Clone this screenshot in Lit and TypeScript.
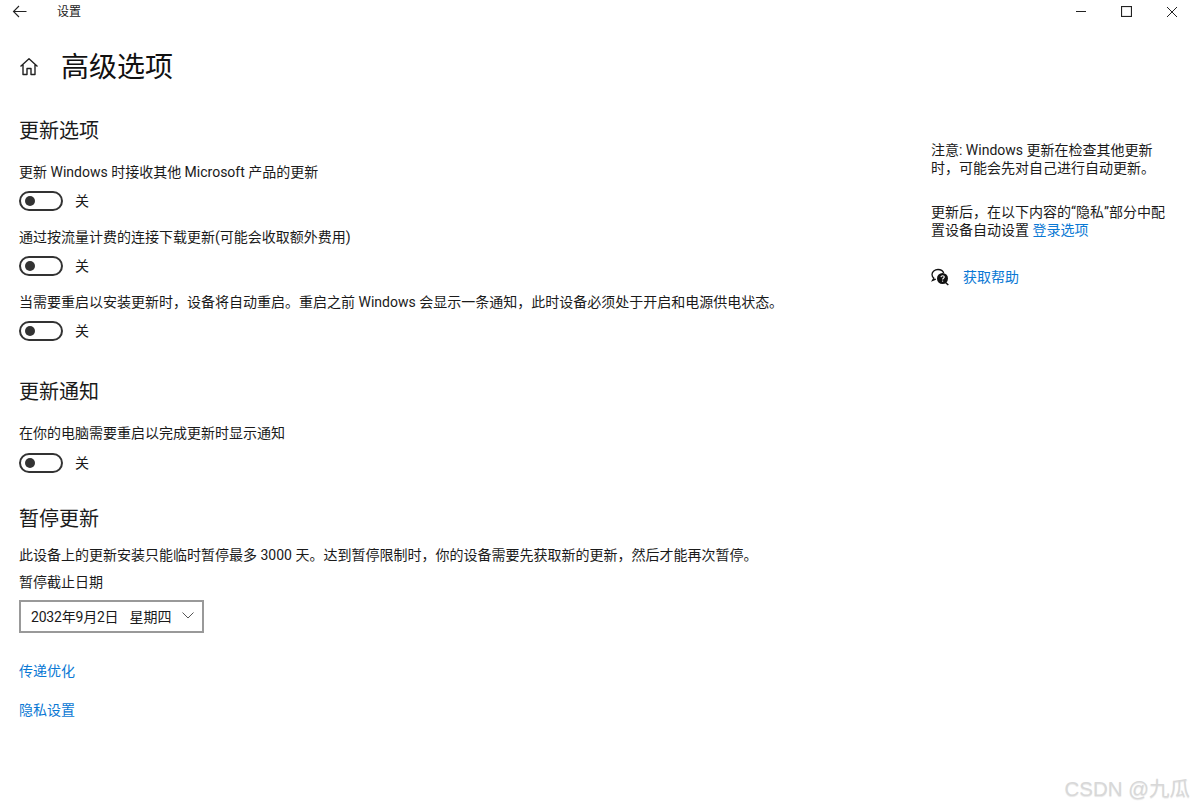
import { LitElement, html, css } from "lit";
import { customElement } from "lit/decorators.js";

@customElement("app-root")
export class AppRoot extends LitElement {
  static styles = css`
    :host {
      display: block;
      position: relative;
      width: 1195px;
      height: 809px;
      overflow: hidden;
      background: #fff;
      color: #1a1a1a;
      font-family: Roboto, "Noto Sans CJK SC", sans-serif;
      font-size: 14px;
    }
    .bar { display: flex; align-items: center; height: 23px; }
    .back { width: 19px; height: 14px; margin: 0 0 0 12px; }
    .bar-title { margin-left: 26px; padding-top: 2px; font-size: 12px; line-height: 23px; }
    .win { margin-left: auto; display: flex; align-items: center; gap: 35px; padding-right: 18px; }
    .win svg { display: block; width: 10px; height: 10px; }
    .win .wm { width: 11px; height: 11px; }
    .body { display: flex; justify-content: space-between; }
    .main { padding: 24px 0 0 19px; width: 850px; }
    .page-head { display: flex; align-items: center; height: 40px; }
    .home { width: 20px; height: 20px; margin-right: 22px; }
    h1 { margin: 0; padding-top: 2px; font-size: 28px; line-height: 40px; font-weight: 400; color: #111; }
    h2 { margin: 0; font-size: 20px; line-height: 28px; font-weight: 400; color: #1a1a1a; }
    .s1 { margin-top: 30px; }
    .s2 { margin-top: 37px; }
    .s3 { margin-top: 32px; }
    .label { line-height: 20px; white-space: nowrap; }
    .opt-label { margin-top: 17px; }
    .row { display: flex; align-items: center; height: 20px; margin-top: 9px; }
    .row + .label { margin-top: 16px; }
    .s2 .row { margin-top: 10px; }
    .tog {
      box-sizing: border-box; width: 44px; height: 20px; border: 2px solid #333;
      border-radius: 10px; padding-left: 4px; display: flex; align-items: center;
    }
    .tog i { display: block; width: 10px; height: 10px; border-radius: 50%; background: #333; }
    .state { margin-left: 12px; line-height: 20px; }
    .para { margin-top: 12px; }
    .date-label { margin-top: 7px; }
    .combo {
      box-sizing: border-box; width: 185px; height: 33px; margin-top: 8px;
      border: 2px solid #999; display: flex; align-items: center; padding: 0 8px 2px 10px; white-space: nowrap;
    }
    .combo .date { letter-spacing: -0.2px; }
    .combo .day { margin-left: 11px; }
    .combo svg { width: 12px; height: 7px; margin-left: auto; }
    a { color: #0a78d4; text-decoration: none; }
    .links { margin-top: 28px; display: flex; flex-direction: column; gap: 19px; line-height: 20px; }
    aside { width: 264px; padding-top: 118px; line-height: 18px; }
    aside p { margin: 0 0 26px; width: 240px; }
    .help { display: flex; align-items: center; margin-top: 28px; line-height: 20px; }
    .help svg { width: 18px; height: 18px; margin-right: 14px; }
    .wm-text {
      position: absolute; right: 5px; top: 775px; font-size: 20.5px; line-height: 28px;
      color: #d8d8d8; text-shadow: 0 1px 1px rgba(0,0,0,.1); font-family: "Liberation Sans", "Noto Sans CJK SC", sans-serif;
    }
  `;

  private toggle(label: string) {
    return html`<div class="label opt-label">${label}</div>
      <div class="row"><div class="tog"><i></i></div><span class="state">关</span></div>`;
  }

  render() {
    return html`
      <div class="bar">
        <svg class="back" viewBox="0 0 19 14" fill="none" stroke="#222" stroke-width="1.1">
          <path d="M14.5 6.5H1.5M7 1 1.5 6.5 7 12" />
        </svg>
        <span class="bar-title">设置</span>
        <div class="win">
          <svg viewBox="0 0 10 10" stroke="#222" stroke-width="1"><path d="M0 4.5H10" /></svg>
          <svg class="wm" viewBox="0 0 10 10" fill="none" stroke="#222" stroke-width="1"><rect x=".5" y=".5" width="9" height="9" /></svg>
          <svg viewBox="0 0 10 10" stroke="#222" stroke-width="1"><path d="M0 0 10 10M10 0 0 10" /></svg>
        </div>
      </div>
      <div class="body">
        <div class="main">
          <div class="page-head">
            <svg class="home" viewBox="0 0 20 20" fill="none" stroke="#222" stroke-width="1.4" stroke-linejoin="round">
              <path d="M1.5 9.5 10 1.8l8.5 7.7M4 7.5V17.5h4V11.5h4V17.5h4V7.5" />
            </svg>
            <h1>高级选项</h1>
          </div>
          <section class="s1">
            <h2>更新选项</h2>
            ${this.toggle("更新 Windows 时接收其他 Microsoft 产品的更新")}
            ${this.toggle("通过按流量计费的连接下载更新(可能会收取额外费用)")}
            ${this.toggle("当需要重启以安装更新时，设备将自动重启。重启之前 Windows 会显示一条通知，此时设备必须处于开启和电源供电状态。")}
          </section>
          <section class="s2">
            <h2>更新通知</h2>
            ${this.toggle("在你的电脑需要重启以完成更新时显示通知")}
          </section>
          <section class="s3">
            <h2>暂停更新</h2>
            <div class="label para">此设备上的更新安装只能临时暂停最多 3000 天。达到暂停限制时，你的设备需要先获取新的更新，然后才能再次暂停。</div>
            <div class="label date-label">暂停截止日期</div>
            <div class="combo">
              <span class="date">2032年9月2日</span><span class="day">星期四</span>
              <svg viewBox="0 0 12 7" fill="none" stroke="#555" stroke-width="1"><path d="M.5 .5 6 6l5.500-5.500" /></svg>
            </div>
          </section>
          <div class="links"><a href="#">传递优化</a><a href="#">隐私设置</a></div>
        </div>
        <aside>
          <p>注意: Windows 更新在检查其他更新时，可能会先对自己进行自动更新。</p>
          <p>更新后，在以下内容的“隐私”部分中配置设备自动设置 <a href="#">登录选项</a></p>
          <div class="help">
            <svg viewBox="0 0 18 18">
              <path d="M7 1.500C3.700 1.500 1 3.600 1 6.500c0 1.500.7 2.800 1.900 3.700L1.500 12.500l3.300-1.300" fill="none" stroke="#111" stroke-width="1.300" />
              <path d="M7 1.500c2.800 0 5 1.500 5.700 3.500" fill="none" stroke="#111" stroke-width="1.300" />
              <circle cx="11.500" cy="10.500" r="5.500" fill="#111" />
              <path d="M14.500 14.500l2.800 2.500" stroke="#111" stroke-width="1.500" />
              <path d="M9.900 9.200c.2-1 .9-1.500 1.700-1.500 1 0 1.700.6 1.700 1.400 0 1.200-1.700 1.200-1.700 2.500" fill="none" stroke="#fff" stroke-width="1.100" />
              <circle cx="11.600" cy="13.100" r=".7" fill="#fff" />
            </svg>
            <a href="#">获取帮助</a>
          </div>
        </aside>
      </div>
      <div class="wm-text">CSDN @九瓜</div>
    `;
  }
}
